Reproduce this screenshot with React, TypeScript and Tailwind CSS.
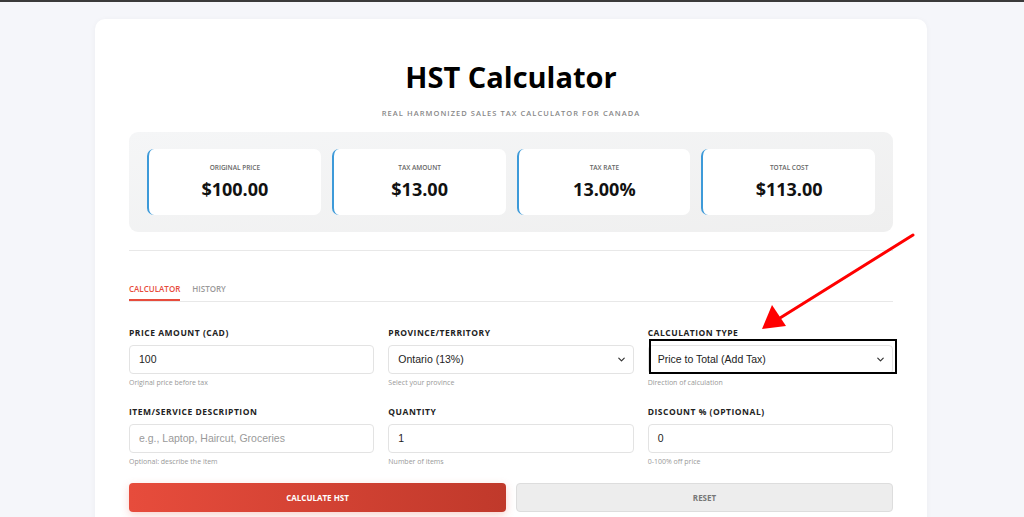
import { ChevronDown } from 'lucide-react'

const stats = [
  { label: 'Original Price', value: '$100.00' },
  { label: 'Tax Amount', value: '$13.00' },
  { label: 'Tax Rate', value: '13.00%' },
  { label: 'Total Cost', value: '$113.00' },
]

function Label({ children }: { children: React.ReactNode }) {
  return (
    <div className="mb-[6px] text-[8.5px] font-bold uppercase leading-[12px] tracking-[0.06em] text-[#222]">
      {children}
    </div>
  )
}

function Help({ children }: { children: React.ReactNode }) {
  return <div className="mt-[4px] text-[7px] leading-[10px] text-[#999]">{children}</div>
}

function TextBox({ value, placeholder }: { value?: string; placeholder?: string }) {
  return (
    <div className="flex h-[29px] items-center rounded-[4px] border border-[#e3e3e3] bg-white px-[9px] font-['Liberation_Sans',Arial,sans-serif] text-[10.5px]">
      {value ? <span className="text-[#222]">{value}</span> : <span className="text-[#9a9a9a]">{placeholder}</span>}
    </div>
  )
}

function SelectBox({ value }: { value: string }) {
  return (
    <div className="flex h-[29px] items-center justify-between rounded-[4px] border border-[#e3e3e3] bg-white pl-[9px] pr-[6px] font-['Liberation_Sans',Arial,sans-serif] text-[10.5px] text-[#222]">
      <span>{value}</span>
      <ChevronDown size={11} strokeWidth={2.6} className="text-[#333]" />
    </div>
  )
}

export default function App() {
  return (
    <div className="relative min-h-[517px] overflow-hidden border-t-2 border-[#3a3a3a] bg-[#f5f6fa] pt-[17px] font-['Open_Sans','Noto_Sans',sans-serif]">
      <div className="ml-[95px] h-[520px] w-[832px] rounded-[10px] bg-white px-[34px] pt-[38px] shadow-[0_1px_6px_rgba(0,0,0,0.04)]">
        <h1 className="text-center text-[29px] font-bold leading-[40px] text-black">HST Calculator</h1>
        <p className="mt-[11px] text-center text-[7.5px] font-semibold uppercase tracking-[0.14em] text-[#888]">
          Real Harmonized Sales Tax Calculator for Canada
        </p>

        <div className="mt-[13px] grid grid-cols-4 gap-[11px] rounded-[9px] bg-gradient-to-br from-[#f5f6f7] to-[#efefef] px-[18px] py-[17px]">
          {stats.map(s => (
            <div
              key={s.label}
              className="flex h-[66px] flex-col items-center rounded-[7px] border-l-[2.5px] border-[#3d9ad9] bg-white pt-[14px]"
            >
              <div className="text-[6.5px] font-semibold uppercase text-[#666]">{s.label}</div>
              <div className="mt-[5px] text-[18px] font-bold leading-[22px] text-[#111]">{s.value}</div>
            </div>
          ))}
        </div>

        <div className="mt-[18px] border-t border-[#e8e8e8]" />

        <div className="mt-[32px] flex gap-[12px] border-b border-[#e8e8e8] text-[8px] font-semibold uppercase leading-[12px]">
          <div className="border-b-2 border-[#e74c3c] pb-[4px] text-[#e74c3c]">Calculator</div>
          <div className="pb-[4px] text-[#999]">History</div>
        </div>

        <div className="mt-[25px] grid grid-cols-3 gap-x-[14px] gap-y-[18px]">
          <div>
            <Label>Price Amount (CAD)</Label>
            <TextBox value="100" />
            <Help>Original price before tax</Help>
          </div>
          <div>
            <Label>Province/Territory</Label>
            <SelectBox value="Ontario (13%)" />
            <Help>Select your province</Help>
          </div>
          <div className="relative">
            <Label>Calculation Type</Label>
            <SelectBox value="Price to Total (Add Tax)" />
            <div className="pointer-events-none absolute left-[1px] right-[-4px] top-[12px] h-[35px] border-2 border-black" />
            <Help>Direction of calculation</Help>
          </div>
          <div>
            <Label>Item/Service Description</Label>
            <TextBox placeholder="e.g., Laptop, Haircut, Groceries" />
            <Help>Optional: describe the item</Help>
          </div>
          <div>
            <Label>Quantity</Label>
            <TextBox value="1" />
            <Help>Number of items</Help>
          </div>
          <div>
            <Label>Discount % (Optional)</Label>
            <TextBox value="0" />
            <Help>0-100% off price</Help>
          </div>
        </div>

        <div className="mt-[16px] grid grid-cols-2 gap-[10px]">
          <button className="h-[29px] rounded-[4px] bg-gradient-to-r from-[#e74c3c] to-[#c0392b] text-[8px] font-bold uppercase text-white shadow-[0_3px_8px_rgba(231,76,60,0.25)]">
            Calculate HST
          </button>
          <button className="h-[29px] rounded-[4px] border border-[#ddd] bg-[#ededed] text-[8px] font-bold uppercase text-[#777]">
            Reset
          </button>
        </div>
      </div>

      <svg className="pointer-events-none absolute left-0 top-0" width="1024" height="517">
        <line x1="913" y1="233" x2="780" y2="316" stroke="#f00" strokeWidth="3" strokeLinecap="round" />
        <polygon points="762,327 772,303 786,324" fill="#f00" />
      </svg>
    </div>
  )
}
